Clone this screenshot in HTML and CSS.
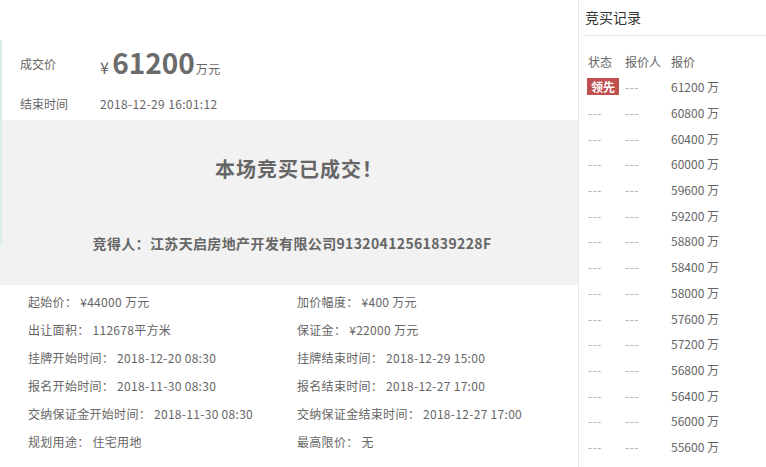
FILE: index.html
```html
<!DOCTYPE html>
<html lang="zh">
<head>
<meta charset="utf-8">
<link rel="stylesheet" href="styles.css">
</head>
<body>
<div class="page">
  <div class="main">
    <div class="row price-row">
      <div class="label">成交价</div>
      <div class="value"><span class="yen">¥</span><span class="big">61200</span><span class="unit">万元</span></div>
    </div>
    <div class="row date-row">
      <div class="label">结束时间</div>
      <div class="value">2018-12-29 16:01:12</div>
    </div>
    <div class="result">
      <div class="result-title">本场竞买已成交！</div>
      <div class="result-winner">竞得人：江苏天启房地产开发有限公司91320412561839228F</div>
    </div>
    <div class="details">
      <div class="cell">起始价： ¥44000 万元</div>
      <div class="cell">加价幅度： ¥400 万元</div>
      <div class="cell">出让面积： 112678平方米</div>
      <div class="cell">保证金： ¥22000 万元</div>
      <div class="cell">挂牌开始时间： 2018-12-20 08:30</div>
      <div class="cell">挂牌结束时间： 2018-12-29 15:00</div>
      <div class="cell">报名开始时间： 2018-11-30 08:30</div>
      <div class="cell">报名结束时间： 2018-12-27 17:00</div>
      <div class="cell">交纳保证金开始时间： 2018-11-30 08:30</div>
      <div class="cell">交纳保证金结束时间： 2018-12-27 17:00</div>
      <div class="cell">规划用途： 住宅用地</div>
      <div class="cell">最高限价： 无</div>
    </div>
  </div>
  <div class="side">
    <div class="side-title">竞买记录</div>
    <div class="records">
      <div class="rec head"><span class="c1">状态</span><span class="c2">报价人</span><span class="c3">报价</span></div>
      <div class="rec"><span class="c1"><span class="badge">领先</span></span><span class="c2 dash">---</span><span class="c3">61200 万</span></div>
      <div class="rec"><span class="c1 dash">---</span><span class="c2 dash">---</span><span class="c3">60800 万</span></div>
      <div class="rec"><span class="c1 dash">---</span><span class="c2 dash">---</span><span class="c3">60400 万</span></div>
      <div class="rec"><span class="c1 dash">---</span><span class="c2 dash">---</span><span class="c3">60000 万</span></div>
      <div class="rec"><span class="c1 dash">---</span><span class="c2 dash">---</span><span class="c3">59600 万</span></div>
      <div class="rec"><span class="c1 dash">---</span><span class="c2 dash">---</span><span class="c3">59200 万</span></div>
      <div class="rec"><span class="c1 dash">---</span><span class="c2 dash">---</span><span class="c3">58800 万</span></div>
      <div class="rec"><span class="c1 dash">---</span><span class="c2 dash">---</span><span class="c3">58400 万</span></div>
      <div class="rec"><span class="c1 dash">---</span><span class="c2 dash">---</span><span class="c3">58000 万</span></div>
      <div class="rec"><span class="c1 dash">---</span><span class="c2 dash">---</span><span class="c3">57600 万</span></div>
      <div class="rec"><span class="c1 dash">---</span><span class="c2 dash">---</span><span class="c3">57200 万</span></div>
      <div class="rec"><span class="c1 dash">---</span><span class="c2 dash">---</span><span class="c3">56800 万</span></div>
      <div class="rec"><span class="c1 dash">---</span><span class="c2 dash">---</span><span class="c3">56400 万</span></div>
      <div class="rec"><span class="c1 dash">---</span><span class="c2 dash">---</span><span class="c3">56000 万</span></div>
      <div class="rec"><span class="c1 dash">---</span><span class="c2 dash">---</span><span class="c3">55600 万</span></div>
    </div>
  </div>
</div>
</body>
</html>
```

FILE: styles.css
```css
html, body {
  margin: 0;
  padding: 0;
  background: #fff;
}
body {
  width: 766px;
  height: 467px;
  overflow: hidden;
  font-family: "Noto Sans CJK SC", "Microsoft YaHei", sans-serif;
  font-size: 12px;
  color: #666;
}
.page {
  display: flex;
  height: 467px;
}
.main {
  width: 578px;
  padding-top: 40px;
  position: relative;
  box-sizing: border-box;
}
.main::before {
  content: "";
  position: absolute;
  left: 0;
  top: 40px;
  width: 2px;
  height: 205px;
  background: #dcecef;
}
.row {
  display: flex;
  align-items: center;
  padding-left: 20px;
}
.price-row {
  height: 46px;
}
.date-row {
  height: 34px;
}
.label {
  width: 80px;
  color: #666;
}
.value {
  color: #666;
  display: flex;
  align-items: baseline;
  letter-spacing: 0.35px;
}
.yen {
  font-size: 16px;
  margin-right: 3px;
}
.big {
  font-size: 28px;
  font-weight: bold;
  color: #6b6b6b;
  line-height: 1;
  letter-spacing: 0;
}
.unit {
  font-size: 12px;
  margin-left: 1px;
}
.result {
  height: 165px;
  background: #f2f2f2;
  text-align: center;
  box-sizing: border-box;
  padding-top: 35px;
  padding-left: 6px;
}
.result-title {
  font-size: 20px;
  font-weight: bold;
  line-height: 28px;
  letter-spacing: 1px;
  padding-left: 14px;
  color: #666;
}
.result-winner {
  margin-top: 50px;
  font-size: 14px;
  font-weight: bold;
  line-height: 20px;
  letter-spacing: 0.35px;
  color: #666;
}
.details {
  display: grid;
  grid-template-columns: 269px 1fr;
  grid-auto-rows: 28px;
  padding-left: 28px;
  padding-top: 2px;
}
.cell {
  display: flex;
  align-items: center;
  white-space: nowrap;
  color: #666;
  letter-spacing: 0.3px;
}
.side {
  width: 187px;
  border-left: 1px solid #e8e8e8;
}
.side-title {
  margin-left: 4px;
  padding-left: 2px;
  height: 35px;
  line-height: 35px;
  font-size: 14px;
  color: #333;
  border-bottom: 1px solid #e8e8e8;
}
.records {
  padding-top: 12px;
  padding-left: 9px;
}
.rec {
  display: flex;
  align-items: center;
  height: 25.7px;
  color: #666;
  white-space: nowrap;
}
.rec.head {
  height: 26px;
}
.c1 {
  width: 37px;
}
.c2 {
  width: 46px;
}
.dash {
  color: #aaa;
  letter-spacing: 0.5px;
}
.badge {
  display: inline-block;
  width: 32px;
  height: 17px;
  line-height: 17px;
  margin-left: -1px;
  background: #c0504d;
  color: #fff;
  font-weight: bold;
  text-align: center;
  font-size: 12px;
}
```
